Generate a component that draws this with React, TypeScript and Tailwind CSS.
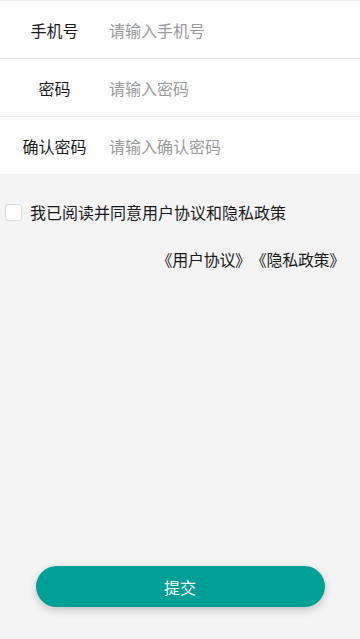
import React from "react";

const font = { fontFamily: '"Noto Sans CJK SC", "Noto Sans", sans-serif' };

function Row({ label, placeholder, last }: { label: string; placeholder: string; last?: boolean }) {
  return (
    <div className={`flex items-center bg-white ${last ? "h-[57px]" : "h-[58px] border-b border-[#e8e8e8]"}`}>
      <div className="w-[109px] shrink-0 text-center text-[16px] text-[#1a1a1a]">{label}</div>
      <input
        className="h-full flex-1 bg-transparent text-[16px] text-[#333] outline-none placeholder:text-[#9a9a9a]"
        placeholder={placeholder}
        style={font}
      />
    </div>
  );
}

export default function App() {
  return (
    <div className="flex h-[639px] w-[360px] flex-col bg-[#f4f4f4]" style={font}>
      <div className="border-t border-[#ececec] bg-white">
        <Row label="手机号" placeholder="请输入手机号" />
        <Row label="密码" placeholder="请输入密码" />
        <Row label="确认密码" placeholder="请输入确认密码" last />
      </div>
      <div className="mt-[26px] flex items-center pl-[5px]">
        <div className="h-[17px] w-[17px] rounded-[3px] border border-[#dcdcdc] bg-white" />
        <span className="ml-[8px] text-[16px] text-[#1a1a1a]">我已阅读并同意用户协议和隐私政策</span>
      </div>
      <div className="mt-[23px] flex justify-end pr-[15px] text-[16px] tracking-[-0.3px] text-[#1a1a1a]">
        <span>《用户协议》</span>
        <span>《隐私政策》</span>
      </div>
      <div className="flex-1" />
      <div className="mb-[32px] flex justify-center">
        <button className="h-[41px] w-[289px] rounded-full bg-[#00a096] text-[16px] text-white shadow-[0_3px_8px_rgba(0,0,0,0.2)]">
          提交
        </button>
      </div>
    </div>
  );
}
